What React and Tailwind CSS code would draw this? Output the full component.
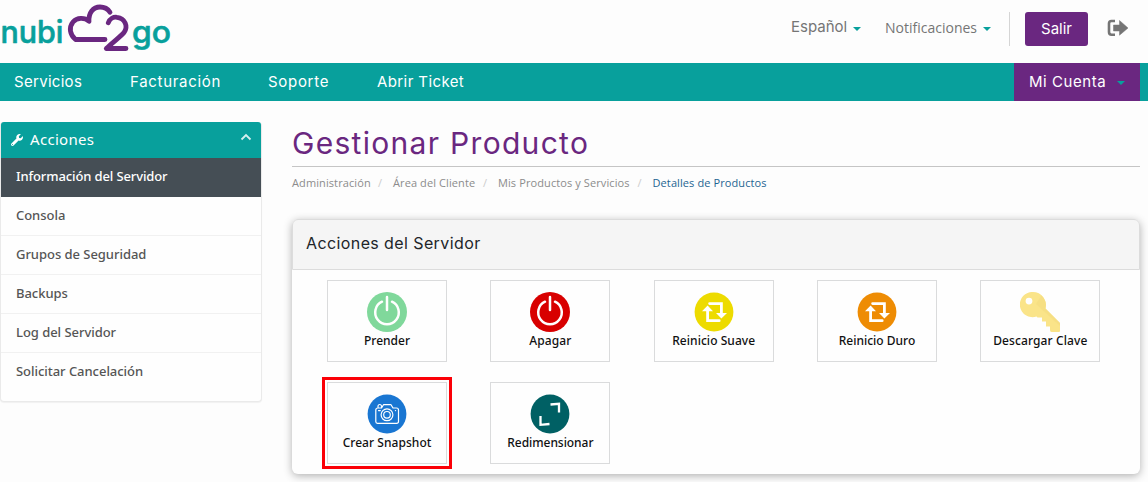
import React from "react";
import { FaWrench } from "react-icons/fa";

const Caret = ({ className = "" }) => (
  <svg width="8" height="4" viewBox="0 0 8 4" className={className}>
    <path d="M0 0h8L4 4z" fill="#08a09c" />
  </svg>
);

const Logo = () => (
  <svg width="176" height="60" viewBox="0 0 176 60" role="img" aria-label="nubi2go">
    <g
      fill="#08a09c"
      stroke="#08a09c"
      strokeWidth="0.6"
      strokeLinejoin="round"
      fontFamily="Inter, sans-serif"
      fontWeight="500"
      fontSize="31"
    >
      <text x="0.5" y="42.5" textLength="63" lengthAdjust="spacingAndGlyphs">nubi</text>
      <text x="132" y="42.5" textLength="39" lengthAdjust="spacingAndGlyphs">go</text>
    </g>
    <g fill="none" stroke="#6a2780" strokeWidth="4.8" strokeLinecap="round" strokeLinejoin="round">
      <path d="M105 39.5H75.5C70 35 68.500 27.500 73 22C77 17.500 84.500 17.300 89 21.300C88.500 13 93 7 100 7C104.500 7 108 9.200 110 12.300" />
      <path d="M108.300 22.800C109.800 18.500 113.500 16.800 117 17.300C125 18.200 128.500 26.500 124 32.500C121.500 35.800 113 42 106.300 48.500H126" />
    </g>
  </svg>
);

const SignOut = () => (
  <svg width="22" height="18" viewBox="0 0 22 18">
    <path d="M8 2H4.500C2.800 2 2 3 2 4.500v8.500C2 14.800 2.800 15.700 4.500 15.700H8" fill="none" stroke="#757575" strokeWidth="2.600" />
    <path d="M6.500 6H12.500V1.500L21 9L12.500 16.200V12H6.500Z" fill="#757575" stroke="#757575" strokeWidth="0.500" strokeLinejoin="round" />
  </svg>
);

const Power = ({ color }) => (
  <svg width="40" height="40" viewBox="0 0 40 40">
    <circle cx="20" cy="20" r="20" fill={color} />
    <g fill="none" stroke="#fff" strokeWidth="2.500" strokeLinecap="round">
      <path d="M15 9.700A11.800 11.800 0 1 0 25 9.700" />
      <path d="M20 5V18" />
    </g>
  </svg>
);

const Restart = ({ color }) => (
  <svg width="40" height="40" viewBox="0 0 40 40">
    <circle cx="20" cy="20" r="19.400" fill={color} />
    <g fill="none" stroke="#fff" strokeWidth="2.800" strokeLinecap="round">
      <path d="M15.600 11.600H27.400V22" strokeLinejoin="miter" />
      <path d="M25.200 28.700H13.600V18" />
    </g>
    <path d="M8 19.300L13.600 13.500L19 19.300ZM22 21L27.400 26.500L33 21Z" fill="#fff" />
  </svg>
);

const Key = () => (
  <svg width="40" height="40" viewBox="0 0 40 40">
    <path
      fillRule="evenodd"
      fill="#fae489"
      d="M13 0A13 13 0 0 1 25.500 16.500L40 31V39Q40 40 39 40H31.500Q30 40 30 38V34.500H26V29.500H22V25.500H17.500L16.500 24.500A12.600 12.600 0 1 1 13 0ZM9 5.700A3.400 3.400 0 1 0 9 12.500A3.400 3.400 0 1 0 9 5.700Z"
    />
    <path d="M25.500 16.500L40 31V34L16 12L21.500 3.500Q27 9 25.500 16.500Z" fill="#f5dd82" opacity="0.800" />
  </svg>
);

const Camera = () => (
  <svg width="40" height="40" viewBox="0 0 40 40">
    <circle cx="20" cy="20" r="19.400" fill="#1976d2" />
    <g fill="none" stroke="#fff" strokeWidth="1.200" strokeLinejoin="round" strokeLinecap="round">
      <path d="M11 14V12.500Q11 10.500 12.800 10.500Q14.500 10.500 14.500 12.500V14L16.500 10.700H24L26 14H29.500Q31.500 14 31.500 16V27.500Q31.500 29.300 29.500 29.300H10.500Q8.800 29.300 8.800 27.500V16Q8.800 14 11 14H14.500" />
      <circle cx="20" cy="20.800" r="5.900" />
      <circle cx="20" cy="20.800" r="3.300" />
      <path d="M11.500 16.600H13.300M28.400 16.600H28.600" />
    </g>
  </svg>
);

const Resize = () => (
  <svg width="40" height="40" viewBox="0 0 40 40">
    <circle cx="20" cy="20" r="19.400" fill="#006064" />
    <path d="M20.500 10.500L29 9.800V18.500M10.500 22V30.800L19.500 30" fill="none" stroke="#fff" strokeWidth="2.300" />
  </svg>
);

const actions = [
  { label: "Prender", icon: <Power color="#80d89b" />, tracking: "tracking-[0px]" },
  { label: "Apagar", icon: <Power color="#d80000" />, tracking: "tracking-[0.1px]" },
  { label: "Reinicio Suave", icon: <Restart color="#eddb00" />, tracking: "tracking-[0.05px]" },
  { label: "Reinicio Duro", icon: <Restart color="#ee8c04" />, tracking: "tracking-[0px]" },
  { label: "Descargar Clave", icon: <Key />, tracking: "tracking-[0.1px]" },
  { label: "Crear Snapshot", icon: <Camera />, tracking: "tracking-[0.05px]", highlighted: true },
  { label: "Redimensionar", icon: <Resize />, tracking: "tracking-[-0.05px]" },
];

const menu = ["Consola", "Grupos de Seguridad", "Backups", "Log del Servidor", "Solicitar Cancelación"];

const Tile = ({ label, icon, tracking, highlighted }) => (
  <div className="relative flex h-[82px] w-[120px] flex-col items-center border border-[#dadbdc] pt-[11px]">
    {icon}
    <span className={`mt-px font-['Noto_Sans',sans-serif] text-[12px] leading-4 font-medium whitespace-nowrap text-[#111] ${tracking}`}>
      {label}
    </span>
    {highlighted && <div className="absolute -inset-1.5 border-3 border-[#fb0007]" />}
  </div>
);

export default function App() {
  return (
    <div className="h-[482px] overflow-hidden bg-[#fdfdfd] font-['Inter',sans-serif]">
      <header className="flex h-[63px] justify-between">
        <Logo />
        <div className="flex pt-3 text-[#757575]">
          <div className="flex h-[30px] items-center text-[15px]">
            <span className="w-[56px] whitespace-nowrap">Español</span>
            <Caret className="mt-1 ml-[6px]" />
          </div>
          <div className="ml-6 flex h-[30px] items-center font-['Open_Sans',sans-serif] text-[14px]">
            <span className="w-[92px] whitespace-nowrap">Notificaciones</span>
            <Caret className="mt-1 ml-[6px]" />
          </div>
          <div className="ml-[18px] h-[34px] w-px bg-[#d5d5d5]" />
          <button className="ml-[15px] h-[34px] w-[63px] rounded-[3px] bg-[#6a2780] text-[15px] text-white">Salir</button>
          <div className="mt-[7px] mr-[19px] ml-[19px]">
            <SignOut />
          </div>
        </div>
      </header>

      <nav className="flex h-[38px] items-center bg-[#08a09c] pr-2 pl-[14px] text-[15px] text-white">
        <span className="w-[116px] tracking-[0.3px]">Servicios</span>
        <span className="w-[138px] tracking-[0.7px]">Facturación</span>
        <span className="w-[109px] tracking-[0.7px]">Soporte</span>
        <span className="tracking-[0.4px]">Abrir Ticket</span>
        <div className="ml-auto flex h-full w-[126px] items-center bg-[#6a2780] pl-[15px]">
          <span className="w-[78px] tracking-[0.55px] whitespace-nowrap">Mi Cuenta</span>
          <Caret className="mt-0.5 ml-[10px]" />
        </div>
      </nav>

      <div className="flex">
        <aside className="mt-[21px] h-[280px] w-[262px] shrink-0 self-start rounded-[4px] border border-t-0 border-[#eaeaea] bg-[#fefefe] font-['Noto_Sans',sans-serif] shadow-[0_1px_1px_rgba(0,0,0,0.05)]">
          <div className="flex h-9 items-center rounded-t-[3px] bg-[#08a09c] pr-[9px] pl-[10px] text-white">
            <FaWrench size={12} />
            <span className="mb-px ml-[7px] text-[15px] tracking-[0.3px]">Acciones</span>
            <svg width="12" height="8" viewBox="0 0 12 8" className="mb-[7px] ml-auto">
              <path d="M1.500 6.500L6 2L10.500 6.500" fill="none" stroke="#d5efee" strokeWidth="1.800" />
            </svg>
          </div>
          <div className="h-[39px] bg-[#454e55] pl-[15px] text-[13px] leading-[37px] font-medium tracking-[-0.12px] text-white">Información del Servidor</div>
          {menu.map((item) => (
            <div key={item} className="h-[39px] border-b border-[#f1f1f1] pl-[15px] text-[13px] leading-[37px] font-medium tracking-[-0.04px] text-[#555] last:border-b-0">
              {item}
            </div>
          ))}
        </aside>

        <main className="ml-[30px] w-[848px] shrink-0 pt-[21px]">
          <h1 className="h-[45px] border-b border-[#c5c5c5] text-[30px] leading-[43px] tracking-[1.3px] text-[#6a2780]">Gestionar Producto</h1>
          <div className="flex h-[33px] items-center font-['Open_Sans',sans-serif] text-[11px] tracking-[0.1px] whitespace-nowrap text-[#8c8c8c]">
            <span className="w-[86px]">Administración</span>
            <span className="w-[15px] text-[#ccc]">/</span>
            <span className="w-[90px]">Área del Cliente</span>
            <span className="w-[15px] text-[#ccc]">/</span>
            <span className="w-[139.5px]">Mis Productos y Servicios</span>
            <span className="w-[15px] text-[#ccc]">/</span>
            <span className="text-[#1d6592]">Detalles de Productos</span>
          </div>
          <section className="mt-[19px] h-[255px] rounded-[6px] bg-[#fefefe] shadow-[0_2px_8px_rgba(0,0,0,0.3)]">
            <h2 className="h-[51px] rounded-t-[6px] border border-[#dcdcdc] bg-[#f5f5f5] pl-[13px] text-[16px] leading-[47px] tracking-[0.4px] text-[#212529]">
              Acciones del Servidor
            </h2>
            <div className="grid grid-cols-5 justify-items-center gap-y-5 pt-[10px] pr-[18px] pl-[13.4px]">
              {actions.map((a) => (
                <Tile key={a.label} {...a} />
              ))}
            </div>
          </section>
        </main>
      </div>
    </div>
  );
}
